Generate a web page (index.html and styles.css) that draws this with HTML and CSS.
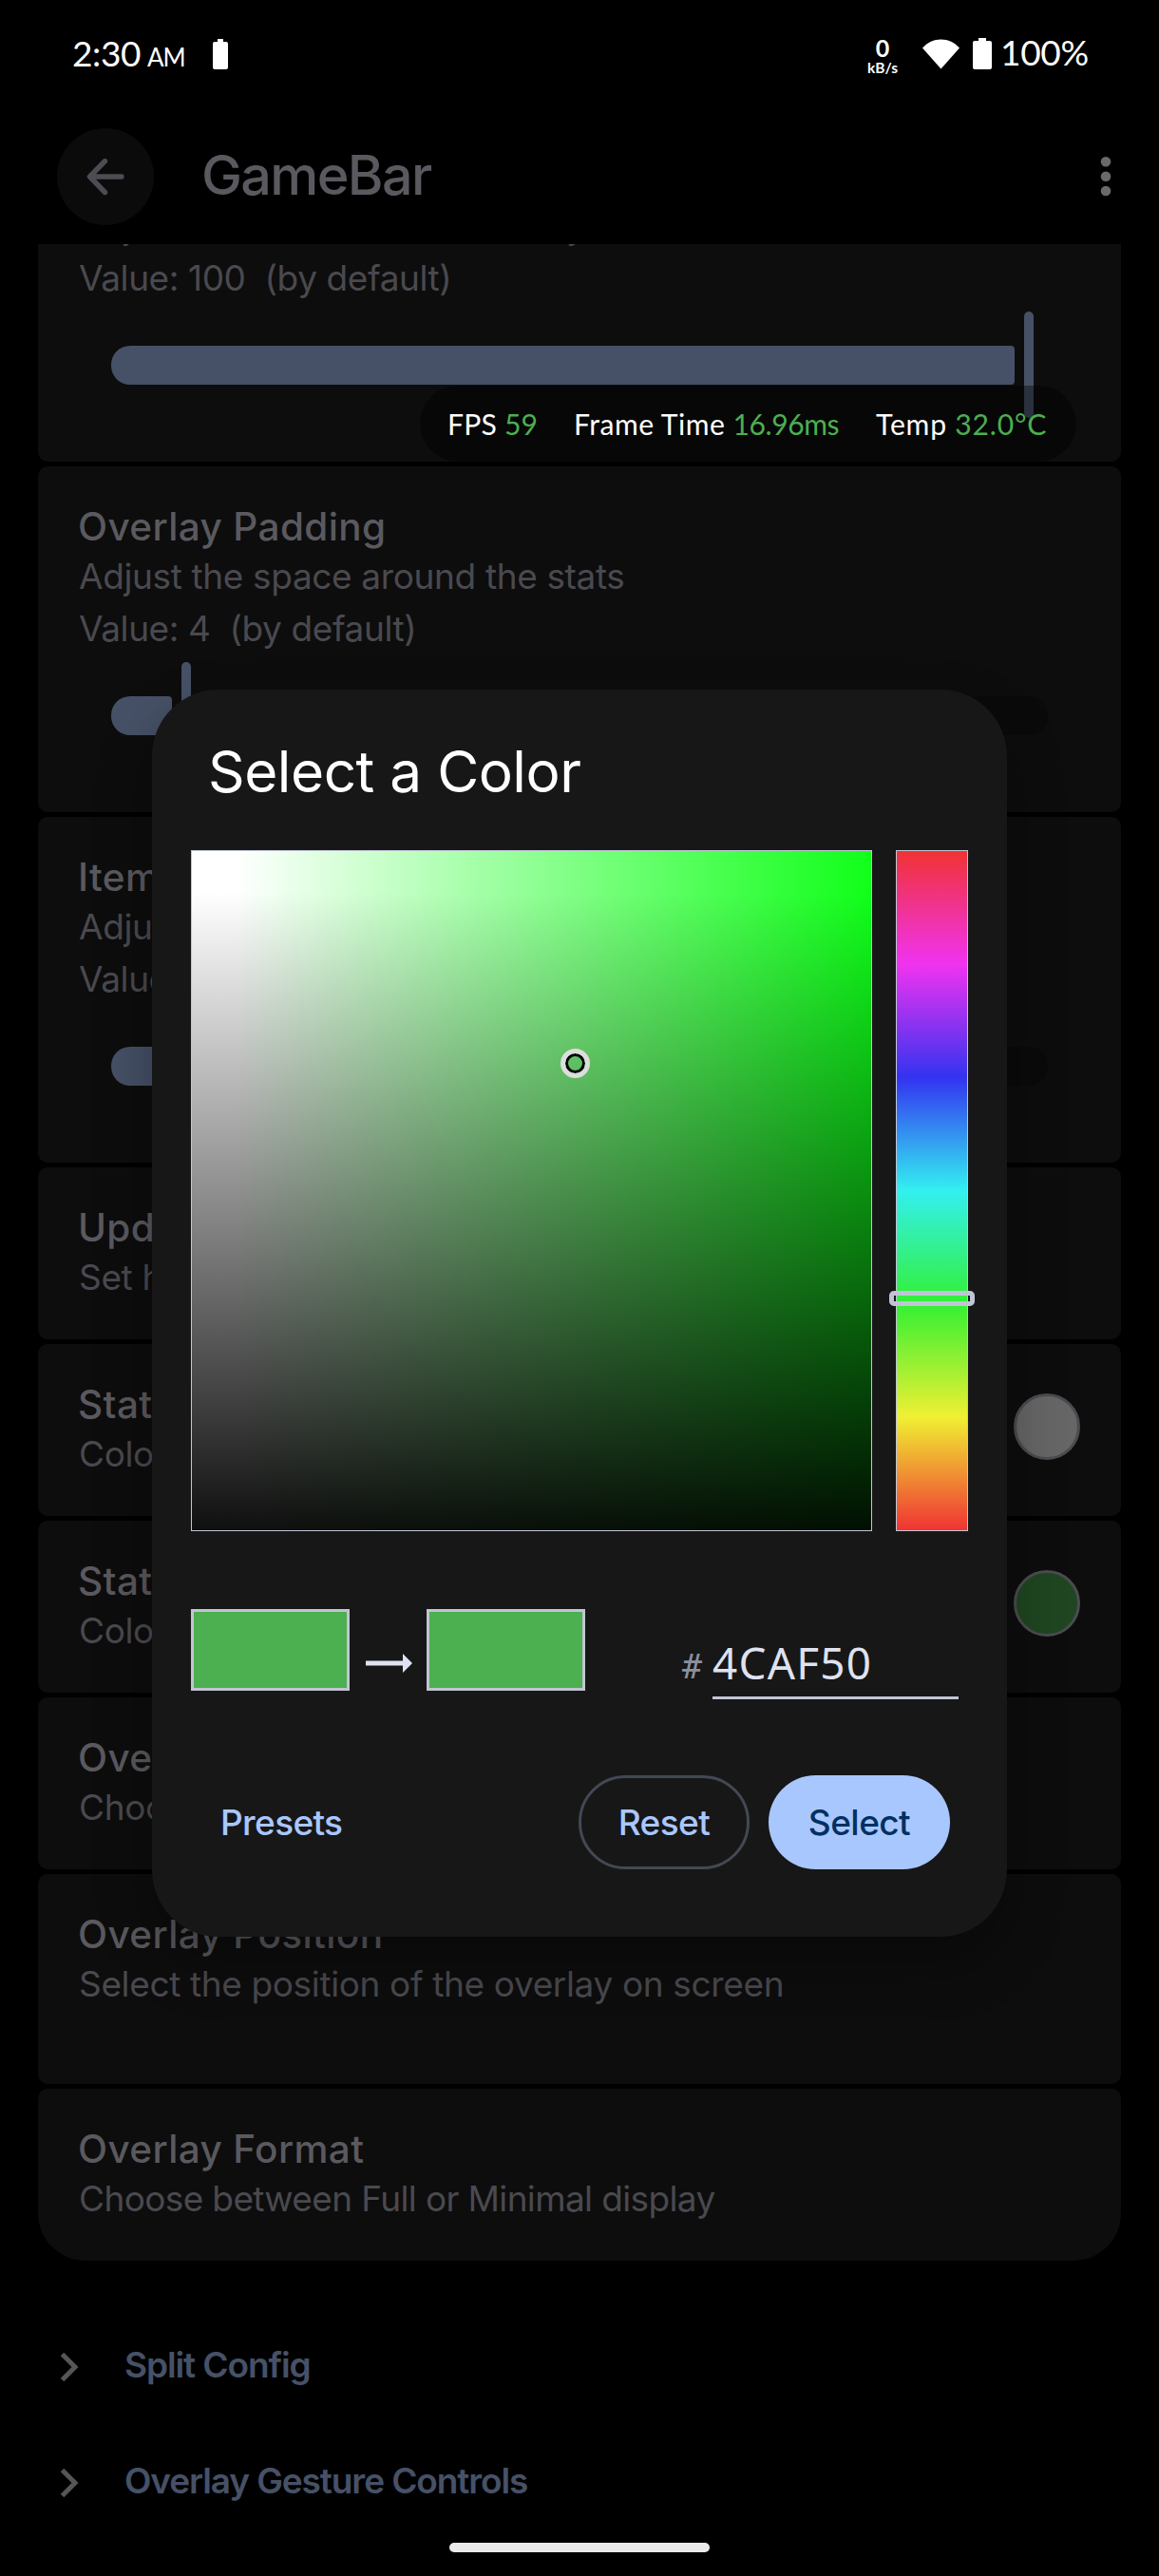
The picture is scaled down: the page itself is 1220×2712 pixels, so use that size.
FILE: index.html
```html
<!DOCTYPE html>
<html lang="en">
<head>
<meta charset="utf-8">
<title>GameBar</title>
<link rel="stylesheet" href="styles.css">
</head>
<body>
<div class="screen">
  <header class="status">
    <span class="time">2:30</span><span class="ampm">AM</span>
    <svg class="status-battery" width="16" height="32" viewBox="0 0 16 32"><path d="M5 0h6v3h3a2 2 0 0 1 2 2v25a2 2 0 0 1-2 2H2a2 2 0 0 1-2-2V5a2 2 0 0 1 2-2h3z" fill="#fff"/></svg>
    <div class="status-right">
      <div class="net"><span class="net-value">0</span><span class="net-unit">kB/s</span></div>
      <svg class="wifi" width="39" height="32" viewBox="0 0 39 32"><path d="M19.500 31.500L0 9.500C5.500 3.500 12 .5 19.500.5S33.500 3.500 39 9.500z" fill="#fff"/></svg>
      <svg class="battery" width="20" height="33" viewBox="0 0 20 33"><path d="M6 0h8v3h4a2 2 0 0 1 2 2v26a2 2 0 0 1-2 2H2a2 2 0 0 1-2-2V5a2 2 0 0 1 2-2h4z" fill="#fff"/></svg>
      <span class="percent">100%</span>
    </div>
  </header>

  <nav class="appbar">
    <div class="back"><svg width="40" height="40" viewBox="0 0 40 40" fill="none" stroke="#4d4c53" stroke-width="5.400" stroke-linecap="round" stroke-linejoin="round"><path d="M37 20H4M19.500 3.500L3.500 20l16 16.500"/></svg></div>
    <h1 class="app-title">GameBar</h1>
    <svg class="more" width="12" height="44" viewBox="0 0 12 44" fill="#6a6a6a"><circle cx="6" cy="6.300" r="5.300"/><circle cx="6" cy="21.700" r="5.300"/><circle cx="6" cy="37" r="5.300"/></svg>
  </nav>

  <main class="list">
    <section class="card card-slider card-first">
      <p class="summary">Adjust the radius of the overlay</p>
      <p class="summary value">Value: 100&nbsp; (by default)</p>
      <div class="slider"><div class="active full"></div><div class="thumb"></div></div>
    </section>
    <section class="card card-slider">
      <h2 class="title">Overlay Padding</h2>
      <p class="summary">Adjust the space around the stats</p>
      <p class="summary value">Value: 4&nbsp; (by default)</p>
      <div class="slider"><div class="active"></div><div class="thumb"></div><div class="inactive"></div></div>
    </section>
    <section class="card card-slider">
      <h2 class="title">Item Spacing</h2>
      <p class="summary">Adjust the space between items</p>
      <p class="summary value">Value: 8&nbsp; (by default)</p>
      <div class="slider"><div class="active mid"></div><div class="thumb"></div><div class="inactive"></div></div>
    </section>
    <section class="card">
      <h2 class="title">Update Interval</h2>
      <p class="summary">Set how often stats update</p>
    </section>
    <section class="card card-color">
      <div><h2 class="title">Stats Title Color</h2><p class="summary">Color of titles</p></div>
      <span class="dot dot-white"></span>
    </section>
    <section class="card card-color">
      <div><h2 class="title">Stats Value Color</h2><p class="summary">Color of values</p></div>
      <span class="dot dot-green"></span>
    </section>
    <section class="card">
      <h2 class="title">Overlay Color</h2>
      <p class="summary">Choose the color</p>
    </section>
    <section class="card card-tall">
      <h2 class="title">Overlay Position</h2>
      <p class="summary">Select the position of the overlay on screen</p>
    </section>
    <section class="card card-last">
      <h2 class="title">Overlay Format</h2>
      <p class="summary choose">Choose between Full or Minimal display</p>
    </section>
  </main>

  <div class="group"><svg class="chevron" width="20" height="32" viewBox="0 0 20 32"><path d="M2.500 2.500L16 16 2.500 29.500" fill="none" stroke="#565558" stroke-width="5"/></svg><span>Split Config</span></div>
  <div class="group"><svg class="chevron" width="20" height="32" viewBox="0 0 20 32"><path d="M2.500 2.500L16 16 2.500 29.500" fill="none" stroke="#565558" stroke-width="5"/></svg><span>Overlay Gesture Controls</span></div>

  <div class="home-bar"></div>

  <div class="stats">
    <span class="stat fps">FPS <b>59</b></span>
    <span class="stat frame">Frame Time <b>16.96ms</b></span>
    <span class="stat temp">Temp <b>32.0°C</b></span>
  </div>

  <div class="dialog">
    <h2 class="dialog-title">Select a Color</h2>
    <div class="picker">
      <div class="sv"><span class="sv-cursor"></span></div>
      <div class="hue"><span class="hue-cursor"></span></div>
    </div>
    <div class="preview">
      <span class="swatch"></span>
      <svg class="arrow" width="49" height="20" viewBox="0 0 49 20" fill="#dfe2f0"><path d="M0 7.500h39V0l10 10-10 10v-7.500H0z"/></svg>
      <span class="swatch"></span>
      <span class="hash">#</span>
      <div class="hex">4CAF50</div>
    </div>
    <div class="actions">
      <span class="btn btn-text">Presets</span>
      <span class="btn btn-outline">Reset</span>
      <span class="btn btn-fill">Select</span>
    </div>
  </div>
</div>
</body>
</html>
```
FILE: styles.css
```css
* { box-sizing: border-box; }
html, body { margin: 0; background: #000; }
h1, h2, p { margin: 0; font-weight: inherit; }
svg { display: block; flex: none; }

.screen {
  position: relative;
  width: 1220px;
  height: 2712px;
  overflow: hidden;
  background: #000;
  font-family: Inter, Roboto, sans-serif;
  color: #fff;
  white-space: nowrap;
}

/* Status bar */
.status { display: flex; height: 135px; padding: 32px 76px 0; font-family: Lato, sans-serif; line-height: 48px; }
.time { width: 79px; font-size: 37px; letter-spacing: -.4px; }
.ampm { width: 69px; padding-top: 4px; font-size: 26px; letter-spacing: -1px; }
.status-battery { margin-top: 9px; }
.status-right { display: flex; margin-left: auto; }
.net { display: flex; flex-direction: column; align-items: center; width: 34px; margin-right: 24.5px; font-weight: 700; }
.net-value { margin-top: 6px; font-size: 25px; line-height: 25px; }
.net-unit { font-size: 15.5px; line-height: 16px; }
.wifi { margin: 9px 14.5px 0 0; }
.battery { margin: 8px 9px 0 0; }
.percent { width: 91px; font-size: 37px; letter-spacing: -.3px; line-height: 46px; }

/* App bar */
.appbar { display: flex; align-items: center; height: 102px; padding: 0 50px 0 60px; }
.back { display: flex; align-items: center; justify-content: center; width: 102px; height: 102px; border-radius: 50%; background: #0b0b0b; }
.app-title { margin: -4px 0 0 50px; font-size: 57.5px; font-weight: 500; letter-spacing: -1.66px; color: #5a595f; }
.more { margin-left: auto; }

/* Preference cards */
.list { display: flex; flex-direction: column; gap: 5px; height: 2123px; margin: 20px 40px 0; overflow: hidden; }
.card { flex: none; height: 181px; padding: 40px 43px 0; border-radius: 10px; background: #0d0d0d; }
.card-slider { height: 364px; }
.card-first { height: 229px; padding-top: 0; border-radius: 0 0 10px 10px; }
.card-first .summary:first-child { margin-top: -47px; }
.card-tall { height: 221px; }
.card-last { border-radius: 10px 10px 50px 50px; }
.card-color { display: flex; justify-content: space-between; }
.title { margin-left: -1px; font-size: 40.5px; font-weight: 500; line-height: 48px; letter-spacing: .38px; color: #5a595f; }
.summary { font-size: 37px; line-height: 55px; letter-spacing: -.36px; color: #4a494f; }
.summary.value { letter-spacing: -.41px; }
.summary.choose { letter-spacing: -.63px; }

.slider { display: flex; align-items: center; gap: 10px; height: 112px; margin: 8px 34px 0; }
.active { width: 64px; height: 41px; border-radius: 20px 4px 4px 20px; background: #465167; }
.active.full { width: 951px; }
.active.mid { width: 180px; }
.thumb { width: 10px; height: 112px; border-radius: 5px; background: #465167; }
.inactive { flex: 1; height: 41px; border-radius: 4px 20px 20px 4px; background: #0a0a0a; }

.dot { width: 70px; height: 70px; margin-top: 12px; border: 3px solid #4c4b51; border-radius: 50%; }
.dot-white { background: #666; }
.dot-green { background: #1f4620; }

/* Collapsed groups */
.group { display: flex; align-items: center; height: 122px; padding-left: 63px; font-size: 37px; font-weight: 600; letter-spacing: -1.1px; color: #465167; }
.list + .group { margin-top: 48px; }
.chevron { margin: 6px 48px 0 0; }

.home-bar { position: absolute; left: 473px; bottom: 25px; width: 274px; height: 10px; border-radius: 5px; background: #ebebeb; }

/* Floating stats overlay */
.stats {
  position: absolute;
  left: 442px;
  top: 406px;
  display: flex;
  width: 691px;
  height: 80px;
  padding-left: 29px;
  border-radius: 40px;
  background: rgba(0, 0, 0, .4);
  font-family: Lato, sans-serif;
  font-size: 30.1px;
  line-height: 80px;
}
.stat b { font-weight: 400; color: #4caf50; }
.fps { width: 133px; letter-spacing: .2px; }
.frame { width: 318px; letter-spacing: .5px; }
.frame b { letter-spacing: -.45px; }
.temp { letter-spacing: .8px; }

/* Colour picker dialog */
.dialog {
  position: absolute;
  left: 160px;
  top: 726px;
  width: 900px;
  height: 1313px;
  padding: 51px 41px 0;
  border-radius: 70px;
  background: #171717;
  box-shadow: 0 28px 60px rgba(0, 0, 0, .32);
}
.dialog-title { padding-left: 18px; font-size: 60.3px; line-height: 72px; letter-spacing: -.49px; }

.picker { display: flex; gap: 25px; margin-top: 46px; }
.sv, .hue { position: relative; height: 717px; border: 1px solid #c0c6d6; }
.sv {
  width: 717px;
  background:
    linear-gradient(to bottom, transparent 6%, #000 106%),
    linear-gradient(to right, #fff 6.3%, #00ff0a 106.3%);
}
.sv-cursor {
  position: absolute;
  left: 388px;
  top: 208px;
  width: 31px;
  height: 31px;
  border: 5px solid #ddd;
  border-radius: 50%;
  box-shadow: inset 0 0 0 3px #000;
}
.hue { width: 76px; background: linear-gradient(to bottom, #f03333, #f033f0, #3333f0, #33f0f0, #33f033, #f0f033, #f03333); }
.hue-cursor { position: absolute; left: -8px; top: 463px; width: 90px; height: 16px; border: 5px solid #c0c5d5; border-radius: 5px; }

.preview { display: flex; align-items: flex-start; height: 95px; margin-top: 82px; }
.swatch { width: 167px; height: 86px; border: 3px solid #c1c5d3; background: #4caf50; }
.arrow { margin: 46.5px 15px 0 17px; }
.hash { width: 32px; margin-left: 102px; padding-top: 31px; font: 35px/60px "DejaVu Sans Mono", monospace; color: #8b909f; }
.hex { width: 259px; height: 95px; padding-top: 26px; border-bottom: 3px solid #c1c5d3; font: 45.8px/60px "Noto Sans", sans-serif; letter-spacing: 1.3px; color: #dfe2f0; }

.actions { display: flex; height: 99px; margin-top: 80px; padding-right: 19px; }
.btn { height: 99px; border-radius: 50px; font-size: 37px; font-weight: 500; line-height: 99px; letter-spacing: -.55px; text-align: center; color: #a9c7ff; }
.btn-text { margin-right: auto; padding-left: 31px; letter-spacing: -.65px; }
.btn-outline { width: 180px; margin-right: 20px; border: 3px solid #434854; line-height: 93px; }
.btn-fill { width: 191px; background: #a9c7ff; color: #003062; }
```
